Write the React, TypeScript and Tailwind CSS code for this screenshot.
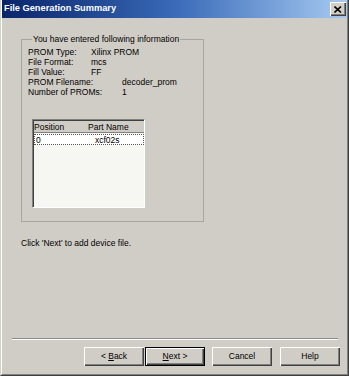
import React from 'react';

const font = { fontFamily: '"Liberation Sans", Arial, sans-serif' };

interface InfoRow {
  label: string;
  value: string;
  wide?: boolean;
}

const rows: InfoRow[] = [
  { label: 'PROM Type:', value: 'Xilinx PROM' },
  { label: 'File Format:', value: 'mcs' },
  { label: 'Fill Value:', value: 'FF' },
  { label: 'PROM Filename:', value: 'decoder_prom', wide: true },
  { label: 'Number of PROMs:', value: '1', wide: true },
];

const WinButton: React.FC<{ children: React.ReactNode; isDefault?: boolean; className?: string }> = ({
  children,
  isDefault,
  className = '',
}) => (
  <button
    className={`h-[19px] w-[60px] flex items-center justify-center whitespace-pre bg-[#d0cdc6] text-[8.5px] leading-none text-black ${
      isDefault
        ? 'border border-black shadow-[inset_1px_1px_0_#fff,inset_-1px_-1px_0_#404040,inset_-2px_-2px_0_#808080]'
        : 'shadow-[inset_1px_1px_0_#fff,inset_-1px_-1px_0_#404040,inset_-2px_-2px_0_#808080]'
    } ${className}`}
  >
    {children}
  </button>
);

export default function App() {
  return (
    <div style={font} className="w-[349px] h-[376px] bg-[#d0cdc6] border-l border-l-[#d4d0c8] border-r border-b border-r-[#404040] border-b-[#404040] text-black">
      <div className="h-full flex flex-col border-l border-l-white border-r border-b border-r-[#808080] border-b-[#808080]">
        {/* title bar */}
        <div className="h-[18px] flex items-center justify-between pl-[2px] pr-[1px] bg-gradient-to-r from-[#0a246a] via-[#3a6ab8] to-[#a6caf0]">
          <span className="text-white font-bold text-[9.25px] leading-none">File Generation Summary</span>
          <div className="w-[16px] h-[14px] flex items-center justify-center bg-[#d4d0c8] shadow-[inset_1px_1px_0_#fff,inset_-1px_-1px_0_#404040,inset_-2px_-2px_0_#808080]">
            <svg width="8" height="7" viewBox="0 0 8 7">
              <path d="M0.5 0.5 L7 6.5 M7 0.5 L0.5 6.5" stroke="#000" strokeWidth="1.6" />
            </svg>
          </div>
        </div>

        {/* group box */}
        <fieldset className="ml-[19px] mt-[16px] w-[183px] h-[188px] border border-[#a8a6a0] pl-[6px] pr-[6px] text-[8.5px] leading-[10px]">
          <legend className="ml-[4px] px-[1px] leading-[10px]">You have entered following information</legend>
          <div className="pt-[3px] flex flex-col">
            {rows.map((r) => (
              <div key={r.label} className="flex">
                <span className={r.wide ? 'w-[94px]' : 'w-[63px]'}>{r.label}</span>
                <span>{r.value}</span>
              </div>
            ))}
          </div>

          <div className="ml-[4px] mt-[22px] w-[113px] h-[89px] flex flex-col bg-[#f6f6f3] border border-t-[#808080] border-l-[#808080] border-r-white border-b-white shadow-[inset_1px_1px_0_#404040]">
            <div className="h-[12px] ml-[1px] mt-[1px] flex items-center bg-[#d0cdc6] border-b border-[#808080]">
              <span className="w-[54px]">Position</span>
              <span>Part Name</span>
            </div>
            <div className="ml-[1px] mt-[1px] h-[11px] flex items-center border border-dotted border-[#555] bg-white">
              <span className="w-[60px] pl-[1px]">0</span>
              <span>xcf02s</span>
            </div>
          </div>
        </fieldset>

        <div className="ml-[19px] mt-[16px] text-[8.5px] leading-[10px]">Click 'Next' to add device file.</div>

        <div className="flex-1" />

        <div className="ml-[10px] w-[326px] border-t border-t-[#8a8a8a] border-b border-b-white" />

        <div className="mt-[7px] mb-[8px] flex">
          <WinButton className="ml-[82px] w-[59px]">
            {'< '}
            <span className="underline">B</span>
            {'ack'}
          </WinButton>
          <WinButton isDefault className="ml-[1px]">
            <span className="underline">N</span>
            {'ext >'}
          </WinButton>
          <WinButton className="ml-[7px]">Cancel</WinButton>
          <WinButton className="ml-[8px]">Help</WinButton>
        </div>
      </div>
    </div>
  );
}
